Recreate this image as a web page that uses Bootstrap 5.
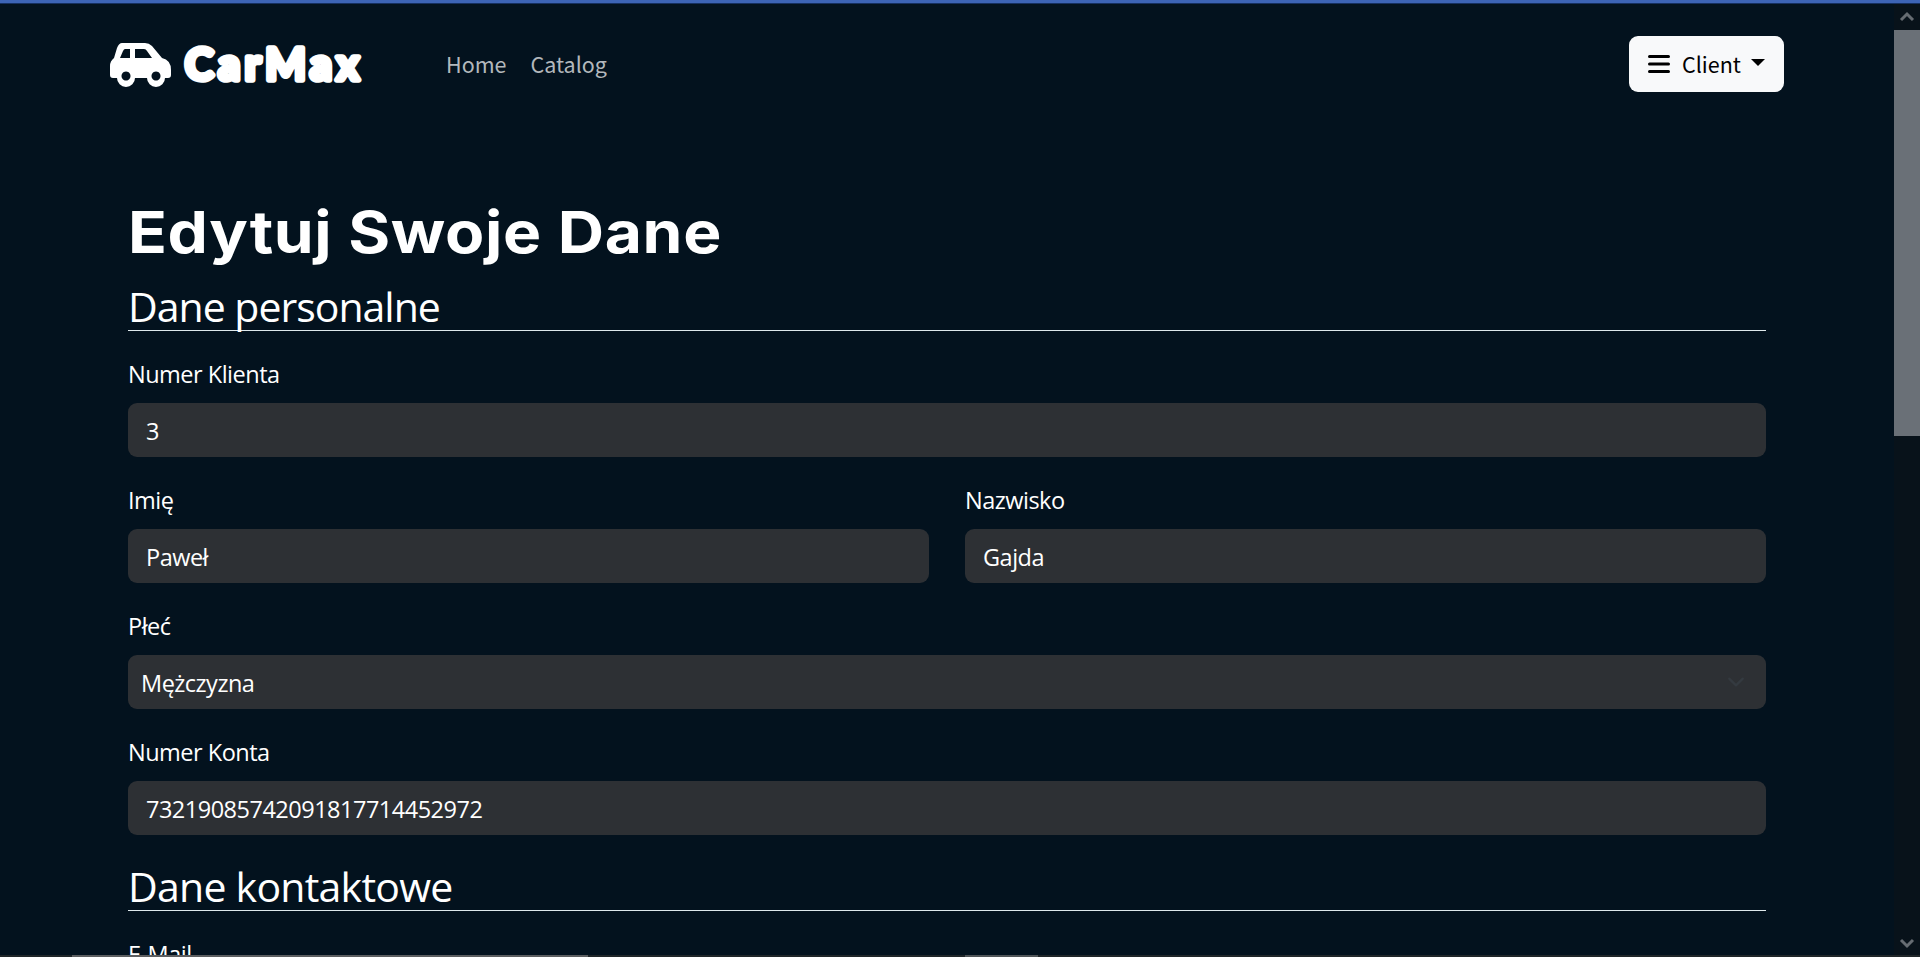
<!DOCTYPE html>
<html lang="pl">
<head>
<meta charset="utf-8">
<title>CarMax</title>
<link rel="stylesheet" href="https://cdn.jsdelivr.net/npm/bootstrap@5.3.0/dist/css/bootstrap.min.css">
<style>
body{background:#03121e;color:#fff;font:400 23.5px/36px "Open Sans","Noto Sans",sans-serif;letter-spacing:-.5px;height:957px}
.topline{height:4px;background:#3d64b5;border-bottom:1px solid #16305f}
.page{width:1710px}
.site-nav{height:120px;padding:0 18px;font-family:"Noto Sans CJK JP",sans-serif;font-size:21.5px;letter-spacing:0}
.site-nav .nav-link{color:#b3b8bc;padding:0 12px}
.nav-items{padding-left:54px}
.menu-btn{width:155px;height:56px;border-radius:9px;background:#f8f9fa;color:#000;font-size:21.5px;padding:0 18px}
.menu-btn:hover{background:#f8f9fa}
.menu-btn span{margin-left:12px}
.form-area{padding:72px 36px 0}
h1{font:700 58px/72px Inter,sans-serif;letter-spacing:.6px;margin:0 0 12px;transform:scaleX(1.105);transform-origin:left;white-space:nowrap}
legend{font-size:41px;line-height:52px;letter-spacing:-1px;height:51px;border-bottom:1px solid #dfe9ec;margin:0 0 24px;white-space:nowrap}
.legend-next{margin-top:25px;letter-spacing:-.75px}
.form-label{margin:0 0 11px;padding-top:1px;display:block}
.form-control,.form-select{height:54px;border:0;border-radius:9px;background-color:#2d3034;color:#fff;font-size:23.5px;line-height:36px;letter-spacing:-.5px;padding:10px 18px 8px}
.form-select{padding-left:13px;background-size:24px 18px;background-position:right 18px center}
.mb-field{margin-bottom:24px}
.two-up{--bs-gutter-x:36px}
.scroller{width:26px;background:#08121a}
.scroller .thumb{height:406px;background:#6a7077}
.scroller svg{display:block}
.bottom-strip{height:2px;background:#202629}
.strip-a{margin-left:72px;width:516px;background:#5c5e60}
.strip-b{margin-left:377px;width:73px;background:#505558}
</style>
</head>
<body class="overflow-hidden d-flex flex-column">
<div class="topline flex-shrink-0"></div>
<div class="d-flex flex-grow-1 overflow-hidden">
  <div class="flex-grow-1 overflow-hidden">
    <div class="page mx-auto">
      <nav class="site-nav d-flex align-items-center">
        <a href="#" aria-label="CarMax">
          <svg width="270" height="60" viewBox="110 34 270 60" class="d-block">
            <path fill="#fff" fill-rule="evenodd" d="M122 43h23q4 0 7 3l10 12q9 2 9 12v5q0 3-3 3h-3a9 9 0 0 1-18 0h-12a9 9 0 0 1-18 0h-4q-3 0-3-3V66q0-5 4-8l3-10q2-5 5-5zM125 49h5v9h-10l3-7q1-2 2-2zM135 49h9q2 0 3 2l5 7h-17zM126 71.500a4.500 4.500 0 1 0 .01 0zM156 71.500a4.500 4.500 0 1 0 .01 0z"/>
            <text x="185" y="79.800" textLength="174" font-family="Lato,sans-serif" font-weight="700" font-size="43" fill="#fff" stroke="#fff" stroke-width="5.500" stroke-linejoin="round">CarMax</text>
          </svg>
        </a>
        <div class="nav-items d-flex flex-grow-1">
          <a class="nav-link" href="#">Home</a>
          <a class="nav-link" href="#">Catalog</a>
        </div>
        <button class="btn menu-btn d-flex align-items-center">
          <svg width="22" height="20" viewBox="0 0 22 20" stroke="#000" stroke-width="3" stroke-linecap="round"><path d="M1.500 2.500h19M1.500 10h19M1.500 17.500h19"/></svg>
          <span>Client</span>
          <svg class="ms-auto" width="14" height="12" viewBox="0 0 14 12"><path d="M0 1h14L7 8z"/></svg>
        </button>
      </nav>
      <form class="form-area">
        <h1>Edytuj Swoje Dane</h1>
        <legend>Dane personalne</legend>
        <div class="mb-field"><label class="form-label">Numer Klienta</label><input class="form-control" value="3"></div>
        <div class="row two-up">
          <div class="col-6 mb-field"><label class="form-label">Imię</label><input class="form-control" value="Paweł"></div>
          <div class="col-6 mb-field"><label class="form-label">Nazwisko</label><input class="form-control" value="Gajda"></div>
        </div>
        <div class="mb-field"><label class="form-label">Płeć</label><select class="form-select"><option>Mężczyzna</option></select></div>
        <div><label class="form-label">Numer Konta</label><input class="form-control" value="73219085742091817714452972"></div>
        <legend class="legend-next">Dane kontaktowe</legend>
        <label class="form-label">E-Mail</label>
      </form>
    </div>
  </div>
  <div class="scroller d-flex flex-column flex-shrink-0">
    <svg class="flex-shrink-0" width="26" height="26" fill="none" stroke="#666c72" stroke-width="3"><path d="M7 16l6-6 6 6"/></svg>
    <div class="thumb flex-shrink-0"></div>
    <svg class="mt-auto" width="26" height="26" fill="none" stroke="#666c72" stroke-width="3"><path d="M7 11l6 6 6-6"/></svg>
  </div>
</div>
<div class="bottom-strip flex-shrink-0 d-flex"><div class="strip-a"></div><div class="strip-b"></div></div>
<script src="https://cdn.jsdelivr.net/npm/bootstrap@5.3.0/dist/js/bootstrap.bundle.min.js"></script>
</body>
</html>
